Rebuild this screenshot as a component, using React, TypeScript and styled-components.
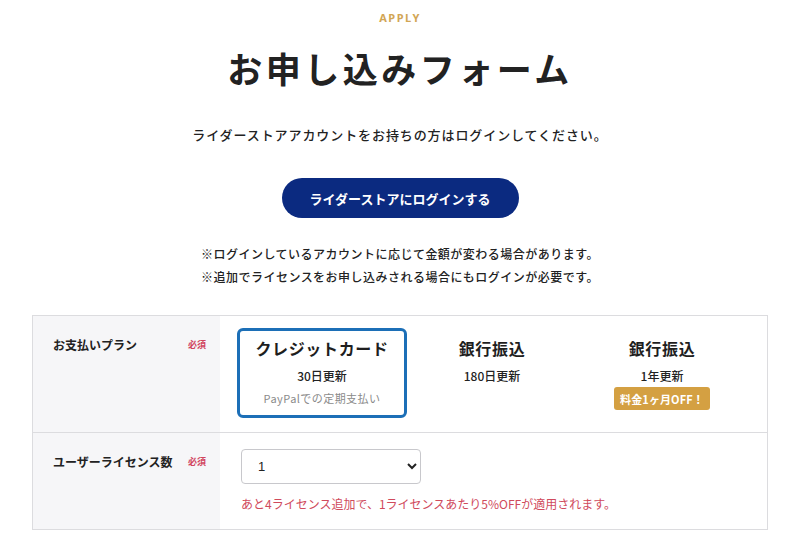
import React from "react";
import styled, { createGlobalStyle } from "styled-components";

const GlobalStyle = createGlobalStyle`
  * { box-sizing: border-box; }
  body {
    margin: 0;
    background: #fff;
    color: #222;
    font-family: "Noto Sans CJK JP", "Noto Sans", sans-serif;
  }
`;

const Page = styled.div`
  display: flex;
  flex-direction: column;
  align-items: center;
  padding: 11px 32px 10px 32px;
`;

// 見出し上の小さな英字
const Eyebrow = styled.div`
  font-family: "Noto Sans", sans-serif;
  font-size: 11px;
  font-weight: 700;
  letter-spacing: 0.14em;
  color: #d2a655;
  line-height: 14px;
`;

const Title = styled.h1`
  margin: 19px 0 0 0;
  font-size: 35px;
  font-weight: 700;
  letter-spacing: 0.1em;
  line-height: 48px;
  color: #222;
`;

const Lead = styled.p`
  margin: 33px 0 0 0;
  font-size: 13px;
  font-weight: 500;
  letter-spacing: 0.07em;
  line-height: 20px;
`;

const LoginButton = styled.button`
  margin-top: 33px;
  width: 237px;
  height: 40px;
  border: none;
  border-radius: 20px;
  background: #0b2a80;
  color: #fff;
  font-family: inherit;
  font-size: 13px;
  font-weight: 700;
  letter-spacing: 0;
  cursor: pointer;
`;

const Notes = styled.div`
  margin-top: 24px;
  text-align: center;
  font-size: 12px;
  font-weight: 500;
  letter-spacing: 0.04em;
  line-height: 23px;
`;

const Table = styled.div`
  margin-top: 27px;
  width: 736px;
  border: 1px solid #dcdcdf;
`;

const Row = styled.div<{ $last?: boolean }>`
  display: grid;
  grid-template-columns: 187px 1fr;
  border-bottom: ${(p) => (p.$last ? "none" : "1px solid #dcdcdf")};
`;

const LabelCell = styled.div`
  background: #f6f6f8;
  display: flex;
  justify-content: space-between;
  align-items: flex-start;
  padding: 20px 14px 0 20px;
`;

const Label = styled.span`
  font-size: 12px;
  font-weight: 700;
  line-height: 18px;
  color: #222;
`;

const Required = styled.span`
  font-size: 9px;
  font-weight: 700;
  line-height: 18px;
  color: #d1455e;
`;

const FieldCell = styled.div<{ $pad: string }>`
  padding: ${(p) => p.$pad};
`;

const Plans = styled.div`
  display: grid;
  grid-template-columns: repeat(3, 170px);
`;

const Plan = styled.div<{ $selected?: boolean }>`
  height: 90px;
  display: flex;
  flex-direction: column;
  align-items: center;
  padding-top: 6px;
  border: 3px solid ${(p) => (p.$selected ? "#1c6fb7" : "transparent")};
  border-radius: 6px;
  cursor: pointer;
`;

const PlanName = styled.div`
  font-size: 16px;
  font-weight: 700;
  letter-spacing: 0.04em;
  line-height: 22px;
  color: #1e1e1e;
`;

const PlanTerm = styled.div`
  margin-top: 9px;
  font-size: 12px;
  font-weight: 500;
  line-height: 16px;
  color: #222;
`;

const PlanSub = styled.div`
  margin-top: 6px;
  font-size: 11px;
  letter-spacing: 0.04em;
  line-height: 16px;
  color: #8a8a8a;
`;

const Badge = styled.span`
  margin-top: 3px;
  padding: 0 6px;
  height: 23px;
  display: inline-flex;
  align-items: center;
  border-radius: 3px;
  background: #d4a042;
  color: #fff;
  font-size: 11px;
  font-weight: 700;
  letter-spacing: 0.01em;
`;

const Select = styled.select`
  display: block;
  width: 180px;
  height: 35px;
  padding: 0 8px 0 12px;
  border: 1px solid #c8c8cc;
  border-radius: 4px;
  background: #fff;
  font-family: "Liberation Sans", sans-serif;
  font-size: 13px;
  color: #222;
`;

const Hint = styled.p`
  margin: 11px 0 0 0;
  font-size: 12px;
  letter-spacing: 0;
  line-height: 18px;
  color: #d04a5c;
`;

interface IPlan {
  name: string;
  term: string;
  sub?: string;
  badge?: string;
}

const planList: Array<IPlan> = [
  { name: "クレジットカード", term: "30日更新", sub: "PayPalでの定期支払い" },
  { name: "銀行振込", term: "180日更新" },
  { name: "銀行振込", term: "1年更新", badge: "料金1ヶ月OFF！" },
];

const App: React.FC = () => {
  const [selected, setSelected] = React.useState(0);
  const [count, setCount] = React.useState("1");

  return (
    <>
      <GlobalStyle />
      <Page>
        <Eyebrow>APPLY</Eyebrow>
        <Title>お申し込みフォーム</Title>
        <Lead>ライダーストアアカウントをお持ちの方はログインしてください。</Lead>
        <LoginButton>ライダーストアにログインする</LoginButton>
        <Notes>
          ※ログインしているアカウントに応じて金額が変わる場合があります。
          <br />
          ※追加でライセンスをお申し込みされる場合にもログインが必要です。
        </Notes>

        <Table>
          <Row>
            <LabelCell>
              <Label>お支払いプラン</Label>
              <Required>必須</Required>
            </LabelCell>
            <FieldCell $pad="12px 0 14px 17px">
              <Plans>
                {planList.map((plan, idx) => (
                  <Plan
                    key={idx}
                    $selected={selected === idx}
                    onClick={() => setSelected(idx)}
                  >
                    <PlanName>{plan.name}</PlanName>
                    <PlanTerm>{plan.term}</PlanTerm>
                    {plan.sub && <PlanSub>{plan.sub}</PlanSub>}
                    {plan.badge && <Badge>{plan.badge}</Badge>}
                  </Plan>
                ))}
              </Plans>
            </FieldCell>
          </Row>
          <Row $last>
            <LabelCell>
              <Label>ユーザーライセンス数</Label>
              <Required>必須</Required>
            </LabelCell>
            <FieldCell $pad="16px 20px 16px 21px">
              <Select value={count} onChange={(e) => setCount(e.target.value)}>
                {[1, 2, 3, 4, 5, 6, 7, 8, 9, 10].map((n) => (
                  <option key={n} value={String(n)}>
                    {n}
                  </option>
                ))}
              </Select>
              <Hint>
                あと4ライセンス追加で、1ライセンスあたり5%OFFが適用されます。
              </Hint>
            </FieldCell>
          </Row>
        </Table>
      </Page>
    </>
  );
};

export default App;
